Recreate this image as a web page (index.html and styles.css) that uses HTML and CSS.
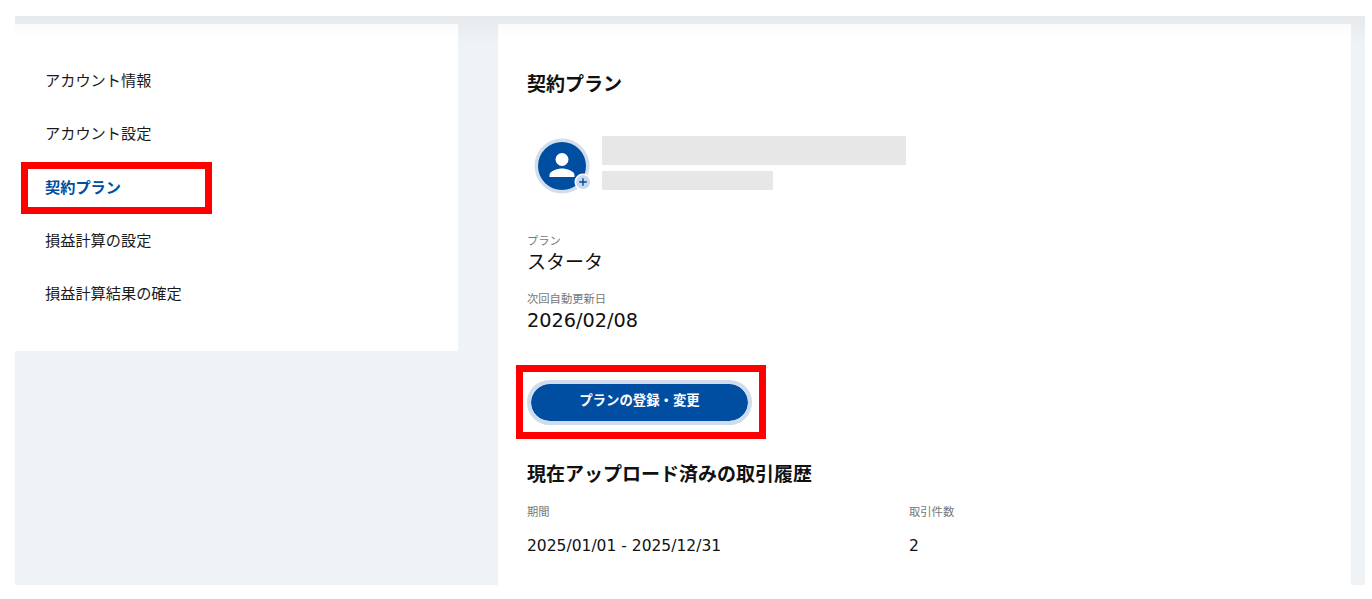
FILE: index.html
```html
<!DOCTYPE html>
<html lang="ja">
<head>
<meta charset="utf-8">
<title>契約プラン</title>
<link rel="stylesheet" href="styles.css">
</head>
<body>
<div class="frame">
  <aside class="side">
    <nav class="nav">
      <a class="nav-item">アカウント情報</a>
      <a class="nav-item">アカウント設定</a>
      <a class="nav-item active">契約プラン<span class="mark mark-nav"></span></a>
      <a class="nav-item">損益計算の設定</a>
      <a class="nav-item">損益計算結果の確定</a>
    </nav>
  </aside>
  <main class="main">
    <h1 class="title">契約プラン</h1>
    <div class="account">
      <div class="avatar">
        <svg class="avatar-svg" viewBox="0 0 56 56" width="56" height="56" aria-hidden="true">
          <circle cx="28" cy="28" r="27.5" fill="#d3deec"/>
          <circle cx="28" cy="28" r="24" fill="#004ea2"/>
          <circle cx="28" cy="21.5" r="6.5" fill="#fff"/>
          <path d="M15.5 39v-2c0-4 8-6.500 12.500-6.500s12.500 2.500 12.500 6.500v2z" fill="#fff"/>
          <circle cx="49" cy="44" r="8.500" fill="#fff"/>
          <circle cx="49" cy="44" r="7" fill="#cbd9ea"/>
          <path d="M49 40.200v7.600M45.200 44h7.600" stroke="#004ea2" stroke-width="1.400"/>
        </svg>
      </div>
      <div class="bars">
        <div class="bar bar-name"></div>
        <div class="bar bar-mail"></div>
      </div>
    </div>
    <div class="label first">プラン</div>
    <div class="value">スタータ</div>
    <div class="label second">次回自動更新日</div>
    <div class="value date">2026/02/08</div>
    <div class="btn-wrap">
      <button class="btn">プランの登録・変更</button>
      <span class="mark mark-btn"></span>
    </div>
    <h2 class="subtitle">現在アップロード済みの取引履歴</h2>
    <div class="table">
      <div class="th">期間</div>
      <div class="th">取引件数</div>
      <div class="td">2025/01/01 - 2025/12/31</div>
      <div class="td">2</div>
    </div>
  </main>
</div>
</body>
</html>
```
FILE: styles.css
```css
* { box-sizing: border-box; }
html, body { margin: 0; padding: 0; height: 100%; overflow: hidden; background: #fff; }
body {
  font-family: "Noto Sans CJK JP", "Noto Sans", sans-serif;
  color: #111;
}
.frame {
  position: relative;
  display: flex;
  gap: 40px;
  align-items: flex-start;
  width: 1350px;
  height: 569px;
  margin: 16px 0 0 15px;
  padding-top: 8px;
  background: linear-gradient(#e7eaed 0, #e9ecef 8px, #eff3f6 30px);
  overflow: hidden;
}
.side {
  width: 443px;
  height: 327px;
  background: linear-gradient(#fbfbfb 0, #fff 14px);
  padding-top: 29px;
}
.nav { display: flex; flex-direction: column; }
.nav-item {
  position: relative;
  display: block;
  height: 53.300px;
  line-height: 53.300px;
  padding-left: 30px;
  font-size: 15.200px;
  color: #1a1a1a;
}
.nav-item.active { color: #004ea2; font-weight: 700; }
.mark { position: absolute; border: 7px solid #f00; pointer-events: none; }
.mark-nav { left: 6px; top: 2px; width: 191px; height: 52px; }
.main {
  width: 853px;
  height: 561px;
  padding: 45px 0 0 29px;
  background: linear-gradient(#fbfbfb 0, #fff 14px);
}
.title {
  margin: 0;
  font-size: 19px;
  line-height: 28px;
  font-weight: 700;
}
.account { display: flex; align-items: flex-start; margin-top: 39px; height: 70px; }
.avatar { width: 56px; height: 56px; margin: 2px 0 0 7px; }
.avatar-svg { display: block; }
.bars { margin-left: 12px; display: flex; flex-direction: column; gap: 6px; }
.bar { background: #e7e7e7; }
.bar-name { width: 304px; height: 29px; }
.bar-mail { width: 171px; height: 19px; }
.label { font-size: 11.300px; line-height: 16px; color: #777; }
.label.first { margin-top: 26px; }
.label.second { margin-top: 16px; }
.value { font-size: 19px; line-height: 26px; color: #111; }
.date { font-family: "DejaVu Sans", sans-serif; font-size: 19.300px; margin-top: 2px; }
.btn-wrap { position: relative; width: 225px; height: 45px; margin-top: 46px; }
.btn {
  display: block;
  width: 225px;
  height: 45px;
  border: 4px solid #cfdcec;
  border-radius: 23px;
  background: #004ea2;
  background-clip: padding-box;
  color: #fff;
  font-family: inherit;
  font-size: 13.400px;
  font-weight: 700;
  padding: 0 0 7px;
}
.mark-btn { left: -11px; top: -15px; width: 250px; height: 74px; }
.subtitle {
  margin: 34px 0 0;
  font-size: 19px;
  line-height: 28px;
  font-weight: 700;
}
.table { display: grid; grid-template-columns: 382px auto; margin-top: 16px; }
.th { font-size: 11.300px; line-height: 16px; color: #777; }
.td { font-family: "DejaVu Sans", sans-serif; font-size: 15.500px; line-height: 22px; margin-top: 16px; color: #111; }
```
